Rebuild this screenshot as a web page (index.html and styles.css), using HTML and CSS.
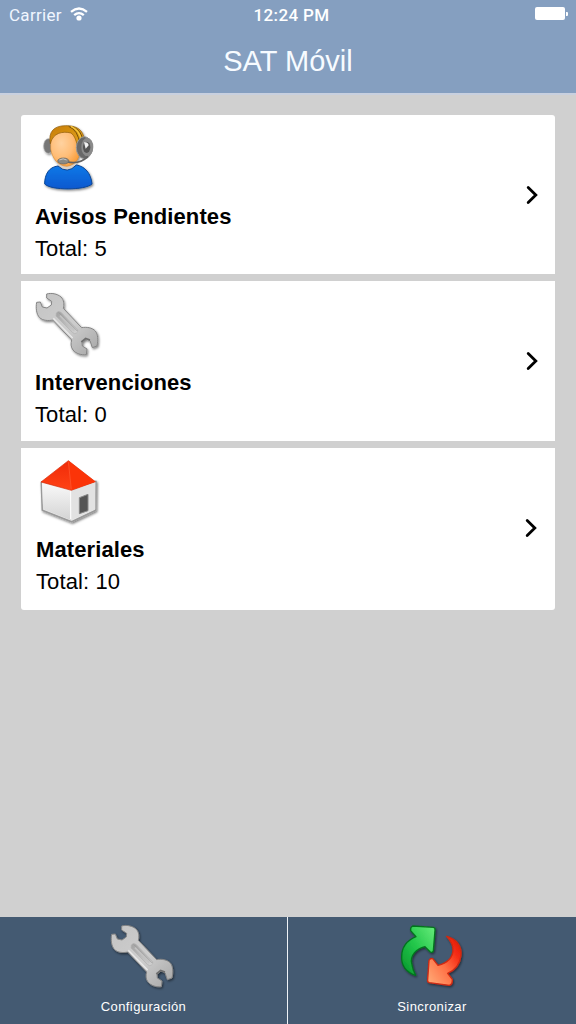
FILE: index.html
```
<!DOCTYPE html>
<html lang="es">
<head>
<meta charset="utf-8">
<title>SAT Móvil</title>
<link rel="stylesheet" href="styles.css">
</head>
<body>
<svg class="defs" width="0" height="0" aria-hidden="true">
  <defs>
    <linearGradient id="steel" x1="0" y1="0" x2="1" y2="1"><stop offset="0" stop-color="#c4c4c4"/><stop offset=".55" stop-color="#cdcdcd"/><stop offset="1" stop-color="#a6a6a6"/></linearGradient>
    <linearGradient id="groove" x1="0" y1="0" x2="1" y2="1"><stop offset="0" stop-color="#a2a2a2"/><stop offset="1" stop-color="#d2d2d2"/></linearGradient>
    <filter id="shadow" x="-20%" y="-20%" width="140%" height="140%"><feDropShadow dx="3" dy="4" stdDeviation="2.5" flood-opacity=".5"/></filter>
    <symbol id="wrench" viewBox="57 21 204 216">
      <g filter="url(#shadow)">
        <path d="M92 42C105 38 124 41 135 51C144 60 145 73 142 85L197 143C211 140 229 143 238 153C246 163 247 180 243 198L229 203L222 182L210 177L198 187L199 198L213 207L211 224C196 226 180 221 171 210C164 201 164 190 167 180L110 120C98 123 80 122 71 113C61 103 59 83 62 67L73 66L79 81L93 84L106 75L107 64L92 54Z" fill="url(#steel)" stroke="#858585" stroke-width="3" stroke-linejoin="round"/>
        <path d="M112 115L170 174" stroke="#e9e9e9" stroke-width="4" fill="none"/>
        <path d="M121 99Q126 91 135 97L185 149Q187 159 176 161L170 158L120 108Z" fill="url(#groove)" stroke="#b0b0b0" stroke-width="2"/>
        <path d="M129 98L184 153" stroke="#909090" stroke-width="2" fill="none"/>
        <path d="M132 107L175 151" stroke="#c2c2c2" stroke-width="5" fill="none"/>
        <path d="M196 186L209 175L222 180" stroke="#6e6e6e" stroke-width="5" fill="none"/>
      </g>
    </symbol>
  </defs>
</svg>
<div class="app">
  <header class="header">
    <div class="status">
      <div class="carrier"><span>Carrier</span>
        <svg class="wifi" viewBox="0 0 18 14"><path d="M1 4.8Q9-1.8 17 4.8M4.2 8.2Q9 4 13.8 8.2" fill="none" stroke="#fff" stroke-width="2.3"/><circle cx="9" cy="11" r="2.6" fill="#fff"/></svg>
      </div>
      <div class="time">12:24 PM</div>
      <div class="battery"><i class="cell"></i><i class="tip"></i></div>
    </div>
    <h1 class="title">SAT Móvil</h1>
  </header>
  <main class="list">
    <a class="card">
      <div class="info">
        <svg class="icon" viewBox="57 33 204 216">
          <defs>
            <radialGradient id="skin" cx=".35" cy=".4" r=".75"><stop offset="0" stop-color="#ffd2a0"/><stop offset=".5" stop-color="#ffbd77"/><stop offset="1" stop-color="#f59326"/></radialGradient>
            <linearGradient id="shirt" x1="0" y1="0" x2="0" y2="1"><stop offset="0" stop-color="#087ae8"/><stop offset="1" stop-color="#0758cf"/></linearGradient>
            <linearGradient id="hair" x1="0" y1="0" x2="1" y2="1"><stop offset="0" stop-color="#c77c08"/><stop offset="1" stop-color="#e7ab1d"/></linearGradient>
          </defs>
          <g filter="url(#shadow)">
            <ellipse cx="97" cy="108" rx="14" ry="22" fill="#777" stroke="#aaa" stroke-width="2"/>
            <path d="M126 158H182V180H126Z" fill="#d9cfc5"/>
            <path d="M126 168Q154 194 181 165C207 169 225 190 228 222C207 241 106 242 86 222C86 194 98 171 126 168Z" fill="url(#shirt)" stroke="#084596" stroke-width="3"/>
            <path d="M104 86C104 60 128 51 155 54C186 57 199 75 195 105C193 140 183 165 153 169C126 168 109 146 104 117Z" fill="url(#skin)" stroke="#c9812a" stroke-width="1.5"/>
            <path d="M103 101C96 65 114 47 149 47C184 46 203 62 204 88L192 124L184 116C183 94 176 77 165 69C140 63 111 68 103 101Z" fill="url(#hair)" stroke="#8b5808" stroke-width="2"/>
            <path d="M158 49Q187 61 191 102M170 50Q198 62 200 92" fill="none" stroke="#76500e" stroke-width="3"/>
            <path d="M165 49Q192 61 196 91" fill="none" stroke="#f7c83c" stroke-width="4"/>
          </g>
          <ellipse cx="205" cy="113" rx="24" ry="33" fill="#686868" stroke="#999" stroke-width="3"/>
          <ellipse cx="214" cy="111" rx="18" ry="28" fill="#8b8b8b"/>
          <ellipse cx="212" cy="112" rx="11" ry="17" fill="#555"/>
          <path d="M204 97Q216 95 218 106L209 116Z" fill="#f2f2f2"/>
          <path d="M151 155Q190 165 216 139" fill="none" stroke="#626262" stroke-width="5"/>
          <ellipse cx="142" cy="153" rx="17" ry="9" fill="#898984" stroke="#5d5d5d" stroke-width="2"/>
          <path d="M130 150Q142 143 152 150" stroke="#c7c7c7" stroke-width="3" fill="none"/>
        </svg>
        <h2 class="name">Avisos Pendientes</h2>
        <p class="total">Total: 5</p>
      </div>
      <svg class="chevron" viewBox="0 0 12 20"><path d="M2.2 2.6L9.8 10L2.2 17.4"/></svg>
    </a>
    <a class="card">
      <div class="info">
        <svg class="icon"><use href="#wrench"/></svg>
        <h2 class="name">Intervenciones</h2>
        <p class="total">Total: 0</p>
      </div>
      <svg class="chevron" viewBox="0 0 12 20"><path d="M2.2 2.6L9.8 10L2.2 17.4"/></svg>
    </a>
    <a class="card card-last">
      <div class="info">
        <svg class="icon" viewBox="57 42 204 216">
          <defs>
            <linearGradient id="wall" x1="0" y1="0" x2="0" y2="1"><stop offset="0" stop-color="#fafafa"/><stop offset="1" stop-color="#d4d4d4"/></linearGradient>
            <linearGradient id="roof" x1="0" y1="0" x2="0" y2="1"><stop offset="0" stop-color="#f02b08"/><stop offset="1" stop-color="#ff4215"/></linearGradient>
          </defs>
          <g filter="url(#shadow)">
            <path d="M76 127L166 144L240 124L239 211L167 245L79 211Z" fill="#e8e8e8" stroke="#999" stroke-width="5" stroke-linejoin="round"/>
            <path d="M78 126L164 150V240L81 207Z" fill="url(#wall)"/>
            <path d="M164 150L238 125V208L167 240Z" fill="#e2e2e2"/>
          </g>
          <path d="M164 151V237" stroke="#fff" stroke-width="3"/>
          <path d="M190 173L216 163V212L190 221Z" fill="#555" stroke="#888" stroke-width="3"/>
          <path d="M157 62L75 126L166 151L238 125Z" fill="url(#roof)" stroke="#d62a08" stroke-width="2"/>
          <path d="M157 62L166 150L238 125Z" fill="#fb3408"/>
          <path d="M157 65L166 148" stroke="#ff5a33" stroke-width="2"/>
        </svg>
        <h2 class="name">Materiales</h2>
        <p class="total">Total: 10</p>
      </div>
      <svg class="chevron" viewBox="0 0 12 20"><path d="M2.2 2.6L9.8 10L2.2 17.4"/></svg>
    </a>
  </main>
  <footer class="footer">
    <a class="tab">
      <svg class="icon"><use href="#wrench"/></svg>
      <span>Configuración</span>
    </a>
    <a class="tab">
      <svg class="icon" viewBox="54 57 204 216">
        <defs>
          <linearGradient id="green" x1="0" y1="1" x2="1" y2="0"><stop offset="0" stop-color="#07932b"/><stop offset=".5" stop-color="#22c64a"/><stop offset="1" stop-color="#69ed7c"/></linearGradient>
          <linearGradient id="red" x1="0" y1="1" x2="1" y2="0"><stop offset="0" stop-color="#ffb07c"/><stop offset=".45" stop-color="#ff7045"/><stop offset=".75" stop-color="#f52b14"/><stop offset="1" stop-color="#d91608"/></linearGradient>
        </defs>
        <g filter="url(#shadow)" stroke-width="4" stroke-linejoin="round">
          <path d="M98 78L160 82Q166 83 165 90L160 153Q157 159 151 156L135 140C108 146 90 167 95 190Q98 210 107 226C84 218 64 200 65 170C65 142 82 121 108 110L92 92Q90 82 98 78Z" fill="url(#green)" stroke="#06741f"/>
          <path d="M200 109C229 116 246 139 243 166C240 194 223 211 203 220L217 238Q218 254 208 256L148 248Q141 246 143 238L147 181Q151 174 158 176L174 196C199 190 217 176 219 152C220 136 211 121 200 109Z" fill="url(#red)" stroke="#cf2a12"/>
        </g>
      </svg>
      <span>Sincronizar</span>
    </a>
  </footer>
</div>
</body>
</html>
```

FILE: styles.css
```
* { box-sizing: border-box; }
body { margin: 0; font-family: "Liberation Sans", Arial, sans-serif; }
h1, h2, p { margin: 0; font-weight: 400; }
svg { display: block; }
.defs { position: absolute; }
.app { width: 576px; height: 1024px; display: flex; flex-direction: column; background: #d0d0d0; overflow: hidden; }
.header { height: 95px; flex: none; background: #859fc0; border-bottom: 2px solid #c8d0df; color: #fff; }
.status { height: 30px; display: grid; grid-template-columns: 1fr auto 1fr; align-items: center; padding: 0 8px 0 9px; font-family: Roboto, sans-serif; font-size: 17px; line-height: 30px; }
.carrier { display: flex; align-items: center; gap: 8px; letter-spacing: .3px; color: #f0f6ff; }
.wifi { width: 18px; height: 14px; margin-bottom: 3px; }
.time { font-weight: 500; letter-spacing: .35px; padding-left: 6px; }
.battery { display: flex; justify-content: flex-end; align-items: center; gap: 1px; padding-bottom: 3px; }
.cell { width: 30px; height: 13px; background: #fff; border-radius: 2px; }
.tip { width: 2px; height: 4px; background: #fff; border-radius: 0 1px 1px 0; }
.title { font-size: 29px; line-height: 34px; padding-top: 14px; text-align: center; height: 63px; color: #f7fbff; }
.list { flex: 1; padding: 20px 21px; display: flex; flex-direction: column; gap: 7px; }
.card { height: 160px; background: #fff; padding: 6px 17px 0 14px; display: flex; justify-content: space-between; align-items: flex-start; color: #000; }
.card:first-child { border-radius: 3px 3px 0 0; height: 159px; }
.card-last { height: 162px; border-radius: 0 0 3px 3px; }
.icon { width: 68px; height: 72px; }
.name { font-size: 22px; font-weight: 700; line-height: 32px; margin-top: 8px; letter-spacing: .1px; }
.total { font-size: 22px; line-height: 32px; letter-spacing: .1px; }
.card-last .name, .card-last .total { padding-left: 1px; }
.chevron { width: 12px; height: 20px; margin-top: 64px; fill: none; stroke: #000; stroke-width: 2.8; stroke-linecap: round; }
.card-last .chevron { margin-right: 1px; }
.footer { height: 107px; flex: none; display: grid; grid-template-columns: 1fr 1fr; background: #445a72; color: #fff; }
.tab { display: flex; flex-direction: column; align-items: center; padding-top: 2px; font-size: 13px; line-height: 18px; letter-spacing: .4px; }
.tab:first-child { border-right: 1px solid #eef2f7; }
.tab span { margin-top: 7px; }
```
